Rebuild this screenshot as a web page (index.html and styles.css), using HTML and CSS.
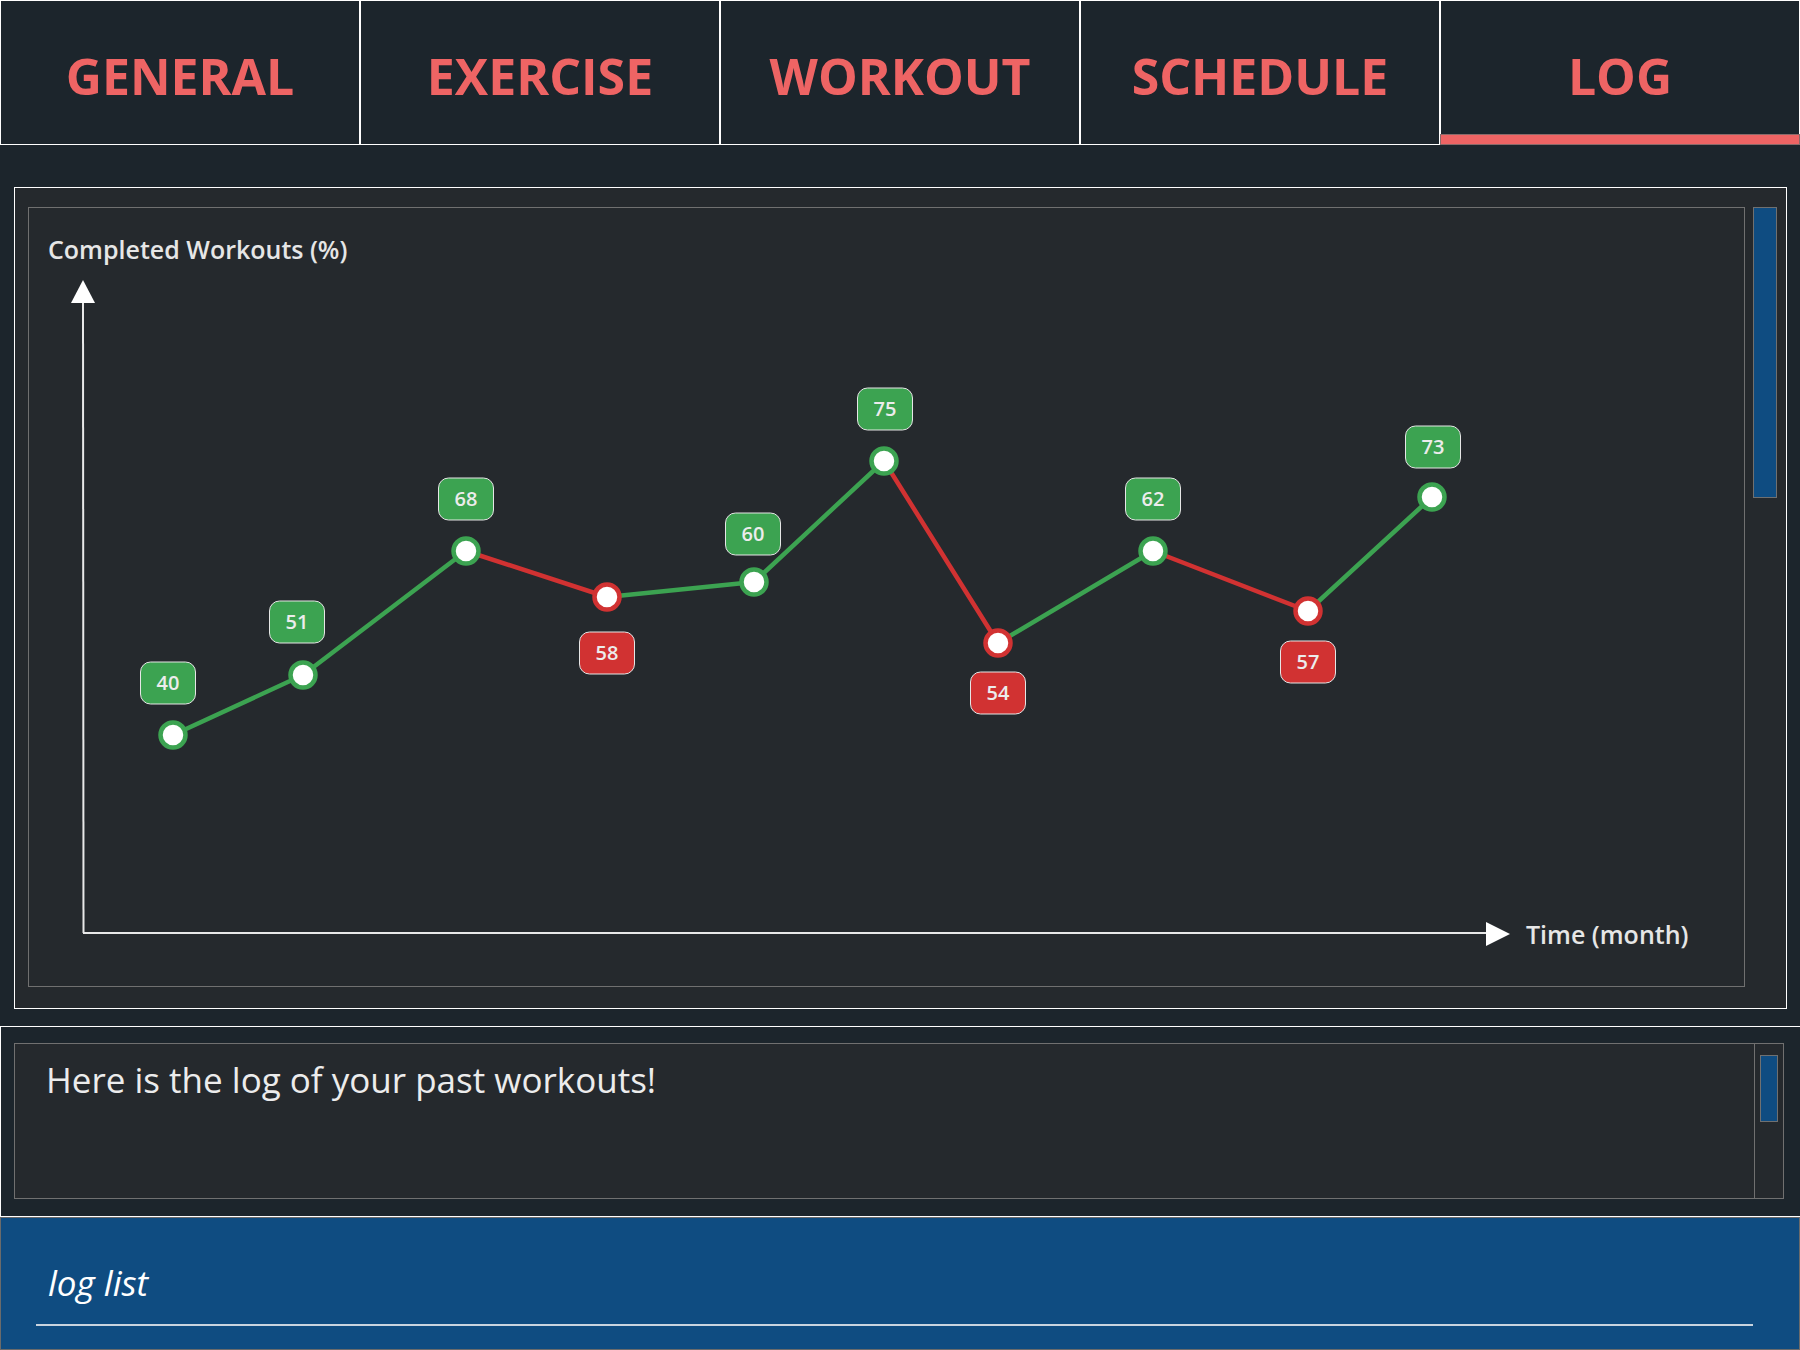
FILE: index.html
```html
<!DOCTYPE html>
<html lang="en">
<head>
<meta charset="utf-8">
<title>Log</title>
<link rel="stylesheet" href="styles.css">
</head>
<body>
<nav class="tabs">
  <div class="tab">GENERAL</div>
  <div class="tab">EXERCISE</div>
  <div class="tab">WORKOUT</div>
  <div class="tab">SCHEDULE</div>
  <div class="tab active">LOG</div>
</nav>

<section class="chart-panel">
  <div class="chart-box">
    <svg class="chart" viewBox="0 0 1715 778" xmlns="http://www.w3.org/2000/svg">
      <text class="axis-title" x="19" y="51">Completed Workouts (%)</text>
      <line class="axis" x1="54" y1="94" x2="54.5" y2="725"/>
      <polygon class="arrow" points="54,72 42,95 66,95"/>
      <line class="axis" x1="54" y1="725" x2="1460" y2="725"/>
      <polygon class="arrow" points="1481,726 1457,714 1457,738"/>
      <text class="axis-title" x="1497" y="736">Time (month)</text>

      <g class="lines">
        <line class="up" x1="144" y1="527" x2="274" y2="467"/>
        <line class="up" x1="274" y1="467" x2="437" y2="343"/>
        <line class="down" x1="437" y1="343" x2="578" y2="389"/>
        <line class="up" x1="578" y1="389" x2="725" y2="374"/>
        <line class="up" x1="725" y1="374" x2="855" y2="253"/>
        <line class="down" x1="855" y1="253" x2="969" y2="435"/>
        <line class="up" x1="969" y1="435" x2="1124" y2="343"/>
        <line class="down" x1="1124" y1="343" x2="1279" y2="403"/>
        <line class="up" x1="1279" y1="403" x2="1403" y2="289"/>
      </g>

      <g class="points">
        <circle class="up" cx="144" cy="527" r="12.5"/>
        <circle class="up" cx="274" cy="467" r="12.5"/>
        <circle class="up" cx="437" cy="343" r="12.5"/>
        <circle class="down" cx="578" cy="389" r="12.5"/>
        <circle class="up" cx="725" cy="374" r="12.5"/>
        <circle class="up" cx="855" cy="253" r="12.5"/>
        <circle class="down" cx="969" cy="435" r="12.5"/>
        <circle class="up" cx="1124" cy="343" r="12.5"/>
        <circle class="down" cx="1279" cy="403" r="12.5"/>
        <circle class="up" cx="1403" cy="289" r="12.5"/>
      </g>

      <g class="labels">
        <rect class="up" x="111.5" y="454" width="55" height="42" rx="10"/>
        <text x="139" y="482">40</text>
        <rect class="up" x="240.5" y="393" width="55" height="42" rx="10"/>
        <text x="268" y="421">51</text>
        <rect class="up" x="409.5" y="270" width="55" height="42" rx="10"/>
        <text x="437" y="298">68</text>
        <rect class="down" x="550.5" y="424" width="55" height="42" rx="10"/>
        <text x="578" y="452">58</text>
        <rect class="up" x="696.5" y="305" width="55" height="42" rx="10"/>
        <text x="724" y="333">60</text>
        <rect class="up" x="828.5" y="180" width="55" height="42" rx="10"/>
        <text x="856" y="208">75</text>
        <rect class="down" x="941.5" y="464" width="55" height="42" rx="10"/>
        <text x="969" y="492">54</text>
        <rect class="up" x="1096.5" y="270" width="55" height="42" rx="10"/>
        <text x="1124" y="298">62</text>
        <rect class="down" x="1251.5" y="433" width="55" height="42" rx="10"/>
        <text x="1279" y="461">57</text>
        <rect class="up" x="1376.5" y="218" width="55" height="42" rx="10"/>
        <text x="1404" y="246">73</text>
      </g>
    </svg>
  </div>
  <div class="scrollbar"></div>
</section>

<section class="log-panel">
  <div class="log-box">
    <p class="log-text">Here is the log of your past workouts!</p>
    <div class="log-scroll"><div class="log-thumb"></div></div>
  </div>
</section>

<section class="loglist">
  <div class="loglist-field">log list</div>
</section>
</body>
</html>
```

FILE: styles.css
```css
html, body {
  margin: 0;
  padding: 0;
}

body {
  width: 1800px;
  height: 1350px;
  overflow: hidden;
  background: #1c252c;
  font-family: "Open Sans", "Noto Sans", sans-serif;
}

.tabs {
  display: flex;
  height: 145px;
}

.tab {
  position: relative;
  flex: 1;
  box-sizing: border-box;
  border: 1px solid #ffffff;
  display: flex;
  align-items: center;
  justify-content: center;
  color: #ee6464;
  font-weight: 700;
  font-size: 50px;
  padding-top: 6px;
}

.tab.active::after {
  content: "";
  position: absolute;
  left: -1px;
  right: -1px;
  bottom: -1px;
  height: 11px;
  background: #ee6464;
  box-shadow: inset 0 0 0 1px #8a6a6a;
}

.chart-panel {
  box-sizing: border-box;
  margin: 42px 0 0 14px;
  width: 1773px;
  height: 822px;
  border: 1px solid #ffffff;
  background: #25292d;
  padding: 19px 9px 21px 13px;
  display: flex;
  align-items: flex-start;
  gap: 8px;
}

.chart-box {
  box-sizing: border-box;
  width: 1717px;
  height: 780px;
  border: 1px solid #707070;
  background: #25292d;
}

.chart {
  display: block;
  width: 1715px;
  height: 778px;
}

.axis-title {
  fill: #e6e6e6;
  font-family: "Open Sans", sans-serif;
  font-weight: 600;
  font-size: 25px;
}

.axis {
  stroke: #e8e8e8;
  stroke-width: 2;
}

.arrow {
  fill: #ffffff;
}

.lines line {
  stroke-width: 4.5;
  stroke-linecap: round;
}

.lines .up { stroke: #3ca351; }
.lines .down { stroke: #d13232; }

.points circle {
  fill: #ffffff;
  stroke-width: 4.5;
}

.points .up { stroke: #3ca351; }
.points .down { stroke: #d13232; }

.labels rect {
  stroke: #e6e6e6;
  stroke-width: 1;
}

.labels rect.up { fill: #3ca351; }
.labels rect.down { fill: #d13232; }

.labels text {
  fill: #ececec;
  font-family: "Open Sans", sans-serif;
  font-weight: 600;
  font-size: 20px;
  text-anchor: middle;
}

.scrollbar {
  box-sizing: border-box;
  width: 24px;
  height: 291px;
  background: #0f4c81;
  border: 1px solid #707070;
}

.log-panel {
  box-sizing: border-box;
  margin-top: 17px;
  width: 1800px;
  height: 191px;
  border: 1px solid #ffffff;
  border-right: 0;
  padding: 16px 16px 17px 13px;
  background: #1c252c;
}

.log-box {
  box-sizing: border-box;
  height: 156px;
  border: 1px solid #707070;
  background: #25292d;
  display: flex;
}

.log-text {
  flex: 1;
  margin: 0;
  padding: 12px 0 0 31px;
  color: #ececec;
  font-size: 35px;
  font-weight: 400;
}

.log-scroll {
  box-sizing: border-box;
  width: 29px;
  border-left: 1px solid #707070;
  padding: 11px 0 0 5px;
}

.log-thumb {
  box-sizing: border-box;
  width: 18px;
  height: 67px;
  background: #0f4c81;
  border: 1px solid #707070;
}

.loglist {
  box-sizing: border-box;
  height: 133px;
  border: 1px solid #6b6b6b;
  background: #0f4c81;
  padding: 40px 0 0 35px;
}

.loglist-field {
  width: 1705px;
  padding: 0 0 17px 12px;
  border-bottom: 2px solid #c9d4df;
  color: #ffffff;
  font-style: italic;
  font-size: 35px;
  line-height: 49px;
}
```
